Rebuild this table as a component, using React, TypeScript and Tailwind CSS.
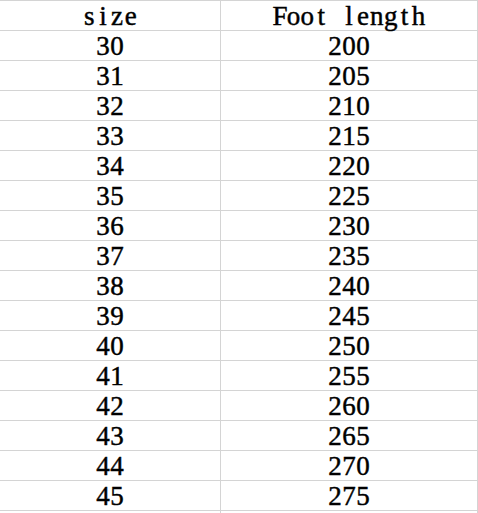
const rows: [string, string][] = [
  ['size', 'Foot length'],
  ['30', '200'],
  ['31', '205'],
  ['32', '210'],
  ['33', '215'],
  ['34', '220'],
  ['35', '225'],
  ['36', '230'],
  ['37', '235'],
  ['38', '240'],
  ['39', '245'],
  ['40', '250'],
  ['41', '255'],
  ['42', '260'],
  ['43', '265'],
  ['44', '270'],
  ['45', '275'],
  ['', ''],
]

// half-width cells, like a CJK sheet font
const Mono = ({ text }: { text: string }) => (
  <span className="flex">
    {text.split('').map((c, i) => (
      <span key={i} className="inline-block w-[13.9px] text-center">
        {c === ' ' ? '\u00a0' : c}
      </span>
    ))}
  </span>
)

export default function App() {
  return (
    <div
      className="w-[478px] h-[513px] overflow-hidden bg-white text-black [-webkit-text-stroke:0.45px_#000]"
      style={{ fontFamily: '"Liberation Serif", "Noto Sans CJK SC", serif' }}
    >
      {rows.map(([size, foot], i) => (
        <div key={i} className="flex h-[30px] border-t border-[#d4d4d4]">
          <div className="w-[221px] border-r border-[#d4d4d4] flex items-center justify-center text-[27px] leading-none pt-[2px]">
            <Mono text={size} />
          </div>
          <div className="w-[257px] border-r border-[#d4d4d4] flex items-center justify-center text-[27px] leading-none pt-[2px]">
            <Mono text={foot} />
          </div>
        </div>
      ))}
    </div>
  )
}
